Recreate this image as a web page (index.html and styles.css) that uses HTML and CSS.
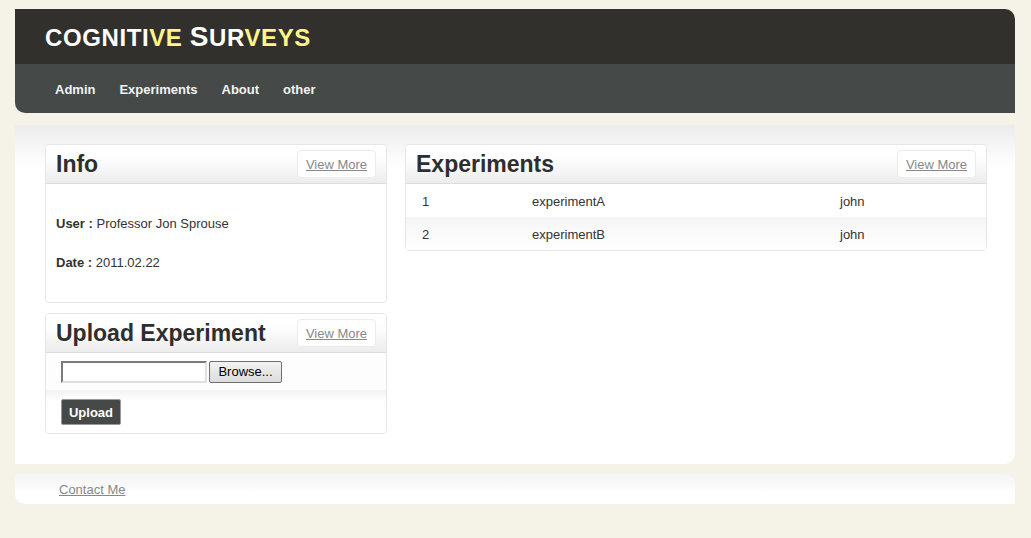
FILE: index.html
```html
<!DOCTYPE html>
<html>
<head>
<meta charset="utf-8">
<title>Cognitive Surveys</title>
<link rel="stylesheet" href="styles.css">
</head>
<body>
<div class="page">
  <header class="header">
    <div class="brand">
      <h1 class="logo">COGNITI<span class="hl">VE</span> <span class="big">S</span>UR<span class="hl">VEYS</span></h1>
    </div>
    <nav class="nav">
      <a href="#">Admin</a>
      <a href="#">Experiments</a>
      <a href="#">About</a>
      <a href="#">other</a>
    </nav>
  </header>

  <main class="main">
    <div class="col-left">
      <section class="panel">
        <div class="panel-head">
          <h2>Info</h2>
          <span class="more"><a href="#">View More</a></span>
        </div>
        <div class="info-body">
          <p><b>User :</b> Professor Jon Sprouse</p>
          <p class="date"><b>Date :</b> 2011.02.22</p>
        </div>
      </section>

      <section class="panel">
        <div class="panel-head">
          <h2>Upload Experiment</h2>
          <span class="more"><a href="#">View More</a></span>
        </div>
        <div class="upload-row">
          <span class="file-box"></span><button class="browse" type="button">Browse...</button>
        </div>
        <div class="submit-row">
          <button class="upload" type="button">Upload</button>
        </div>
      </section>
    </div>

    <div class="col-right">
      <section class="panel">
        <div class="panel-head">
          <h2>Experiments</h2>
          <span class="more"><a href="#">View More</a></span>
        </div>
        <div class="exp-row">
          <span class="c-id">1</span><span class="c-name">experimentA</span><span class="c-user">john</span>
        </div>
        <div class="exp-row alt">
          <span class="c-id">2</span><span class="c-name">experimentB</span><span class="c-user">john</span>
        </div>
      </section>
    </div>
  </main>

  <footer class="footer">
    <a href="#">Contact Me</a>
  </footer>
</div>
</body>
</html>
```

FILE: styles.css
```css
html, body {
  margin: 0;
  padding: 0;
}
body {
  background: #f5f2e8;
  font-family: "Liberation Sans", Arial, sans-serif;
  font-size: 13px;
  color: #333;
}
.page {
  width: 1000px;
  margin: 0 16px 0 15px;
  padding-top: 9px;
}
.header {
  border-radius: 0 10px 0 10px;
  overflow: hidden;
}
.brand {
  background: #31302d;
  height: 55px;
  display: flex;
  align-items: center;
  padding-left: 30px;
}
.logo {
  margin: 0;
  font-size: 24px;
  letter-spacing: 0.6px;
  font-weight: bold;
  color: #fff;
  line-height: 1;
  padding-top: 1px;
}
.logo .hl {
  color: #fff58a;
}
.logo .big {
  font-size: 28px;
}
.nav {
  background: #454a48;
  height: 49px;
  box-sizing: border-box;
  padding-top: 1px;
  display: flex;
  align-items: center;
  gap: 24px;
  padding-left: 40px;
}
.nav a {
  color: #f2f2f2;
  font-weight: bold;
  font-size: 13px;
  text-decoration: none;
}
.main {
  margin-top: 12px;
  background: linear-gradient(#ececec 0, #fafafa 30px, #fff 45px);
  border-radius: 2px 0 10px 0;
  height: 339px;
  box-sizing: border-box;
  padding: 19px 28px 0 30px;
  display: flex;
  gap: 18px;
  align-items: flex-start;
}
.col-left {
  width: 342px;
  display: flex;
  flex-direction: column;
  gap: 10px;
}
.col-right {
  flex: 1;
}
.panel {
  background: #fff;
  border: 1px solid #e6e6e6;
  border-radius: 4px;
  overflow: hidden;
}
.panel-head {
  height: 38px;
  display: flex;
  align-items: center;
  justify-content: space-between;
  padding: 0 10px 0 10px;
  background: linear-gradient(#fff 0, #fdfdfd 40%, #ececec 100%);
  border-bottom: 1px solid #dcdcdc;
}
.panel-head h2 {
  margin: 0;
  font-size: 23px;
  font-weight: bold;
  color: #2e2e2e;
  padding-top: 1px;
}
.more {
  display: flex;
  align-items: center;
  justify-content: center;
  width: 77px;
  height: 26px;
  background: #fff;
  border: 1px solid #ececec;
  border-radius: 4px;
}
.more a {
  color: #888;
  font-size: 13px;
}
.info-body {
  padding: 32px 10px 31px;
}
.info-body p {
  margin: 0;
  line-height: 16px;
}
.info-body p.date {
  margin-top: 23px;
}
.upload-row {
  height: 37px;
  display: flex;
  align-items: center;
  padding-left: 15px;
  background: #fdfdfd;
}
.file-box {
  display: inline-block;
  width: 142px;
  height: 18px;
  border: 2px solid #7a7a7a;
  border-right-color: #e0e0e0;
  border-bottom-color: #e0e0e0;
  background: #fff;
}
.browse {
  margin-left: 2px;
  width: 73px;
  height: 22px;
  font-family: "Liberation Sans", Arial, sans-serif;
  font-size: 13px;
  color: #000;
  border: 1px solid #707070;
  border-radius: 2px;
  background: linear-gradient(#f2f2f2, #dcdcdc);
  padding: 0;
}
.submit-row {
  height: 43px;
  display: flex;
  align-items: center;
  padding: 1px 0 0 15px;
  box-sizing: border-box;
  background: linear-gradient(#f3f3f3 0, #fff 12px);
}
.upload {
  width: 60px;
  height: 26px;
  background: #454a48;
  color: #fff;
  border: 1px solid #999;
  border-radius: 2px;
  font-family: "Liberation Sans", Arial, sans-serif;
  font-size: 13px;
  font-weight: bold;
  padding: 0;
}
.exp-row {
  height: 33px;
  box-sizing: border-box;
  padding-top: 2px;
  display: flex;
  align-items: center;
  padding-left: 16px;
  font-size: 13px;
  color: #333;
}
.exp-row.alt {
  height: 33px;
  background: linear-gradient(#f5f5f5 0, #fff 100%);
}
.c-id {
  width: 110px;
}
.c-name {
  width: 308px;
}
.footer {
  margin-top: 10px;
  height: 30px;
  background: linear-gradient(#f4f4f4 0, #fff 20px);
  border-radius: 0 10px 0 10px;
  display: flex;
  align-items: center;
  padding-left: 44px;
}
.footer a {
  color: #888;
  font-size: 13px;
}
```
